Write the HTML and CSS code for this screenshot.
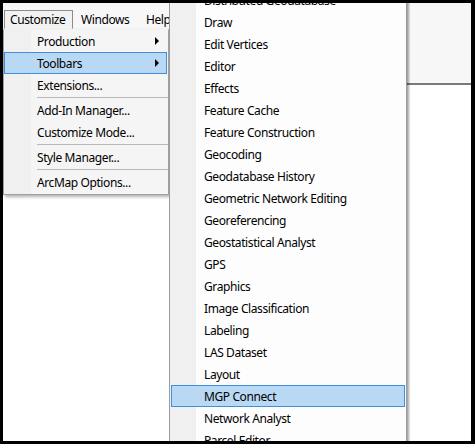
FILE: index.html
```html
<!DOCTYPE html>
<html>
<head>
<meta charset="utf-8">
<link rel="stylesheet" href="styles.css">
</head>
<body>
<div class="frame">
  <div class="toolbar-area">
    <div class="menubar">
      <span class="mb-item mb-customize active">Customize</span>
      <span class="mb-item mb-windows">Windows</span>
      <span class="mb-item mb-help">Help</span>
    </div>
  </div>
  <div class="canvas"></div>

  <div class="menu main-menu">
    <div class="row"><span>Production</span><i class="arrow"></i></div>
    <div class="row hot"><span>Toolbars</span><i class="arrow"></i></div>
    <div class="row"><span>Extensions...</span></div>
    <div class="sep"></div>
    <div class="row"><span>Add-In Manager...</span></div>
    <div class="row"><span>Customize Mode...</span></div>
    <div class="sep"></div>
    <div class="row"><span>Style Manager...</span></div>
    <div class="sep"></div>
    <div class="row"><span>ArcMap Options...</span></div>
  </div>

  <div class="menu sub-menu">
    <div class="row"><span>Distributed Geodatabase</span></div>
    <div class="row"><span>Draw</span></div>
    <div class="row"><span>Edit Vertices</span></div>
    <div class="row"><span>Editor</span></div>
    <div class="row"><span>Effects</span></div>
    <div class="row"><span>Feature Cache</span></div>
    <div class="row"><span>Feature Construction</span></div>
    <div class="row"><span>Geocoding</span></div>
    <div class="row"><span>Geodatabase History</span></div>
    <div class="row"><span>Geometric Network Editing</span></div>
    <div class="row"><span>Georeferencing</span></div>
    <div class="row"><span>Geostatistical Analyst</span></div>
    <div class="row"><span>GPS</span></div>
    <div class="row"><span>Graphics</span></div>
    <div class="row"><span>Image Classification</span></div>
    <div class="row"><span>Labeling</span></div>
    <div class="row"><span>LAS Dataset</span></div>
    <div class="row"><span>Layout</span></div>
    <div class="row hot"><span>MGP Connect</span></div>
    <div class="row"><span>Network Analyst</span></div>
    <div class="row"><span>Parcel Editor</span></div>
    <div class="row"><span>Publisher</span></div>
  </div>
</div>
</body>
</html>
```
FILE: styles.css
```css
* { box-sizing: border-box; }
html, body { margin: 0; padding: 0; background: #000; }
body {
  font-family: "Noto Sans", "Open Sans", sans-serif;
  font-size: 12px;
  letter-spacing: -0.4px;
  color: #000;
}
.frame {
  position: relative;
  width: 475px;
  height: 444px;
  border-style: solid;
  border-color: #000;
  border-width: 3px 4px 3px 3px;
  background: #fff;
  overflow: hidden;
  display: flex;
  flex-direction: column;
}
.toolbar-area {
  height: 82px;
  background: #f7f7f7;
  border-bottom: 2px solid #7a7a7a;
  box-shadow: 0 1px 0 #b8b8b8;
}
.canvas { flex: 1; background: #fff; }

.menubar {
  display: flex;
  padding-top: 7px;
  height: 26px;
}
.mb-item {
  display: flex;
  align-items: center;
  height: 19px;
  border: 1px solid transparent;
  white-space: nowrap;
}
.mb-customize {
  margin-left: 1px;
  width: 69px;
  padding-left: 5px;
}
.mb-customize.active {
  border-color: #8c8c8c;
  border-bottom-color: transparent;
  background: #f2f2f2;
}
.mb-windows { width: 72px; padding-left: 7px; }
.mb-help { padding-left: 0; }

.menu {
  position: absolute;
  border: 1px solid #a0a0a0;
}
.main-menu {
  left: 0;
  top: 26px;
  width: 166px;
  padding: 0 0 1px 0;
  border-top-color: #f2f2f2;
  background: linear-gradient(to right, #f0f0f0 0, #f0f0f0 27px, #f5f5f5 27px);
  box-shadow: 2px 2px 3px rgba(0,0,0,0.3);
}
.sub-menu {
  left: 166px;
  top: -16px;
  width: 238px;
  padding-top: 1px;
  border-color: #9a9a9a;
  background: linear-gradient(to right, #f0f0f0 0, #f0f0f0 26px, #fdfdfd 26px);
  box-shadow: 2px 1px 2px rgba(0,0,0,0.35);
}
.row {
  display: flex;
  align-items: center;
  height: 22px;
  border: 1px solid transparent;
  padding-left: 32px;
  white-space: nowrap;
}
.main-menu .row { margin-right: 1px; }
.sub-menu .row { margin: 0 1px; }
.row.hot {
  background: #b8d8f4;
  border-color: #3f8fdc;
}
.arrow {
  margin-left: auto;
  margin-right: 7px;
  width: 0;
  height: 0;
  border-style: solid;
  border-width: 4px 0 4px 4px;
  border-color: transparent transparent transparent #000;
}
.sep {
  height: 3px;
  margin-left: 33px;
  display: flex;
  align-items: center;
}
.sep::before {
  content: "";
  display: block;
  width: 100%;
  border-top: 1px solid #b9b9b9;
}
```
